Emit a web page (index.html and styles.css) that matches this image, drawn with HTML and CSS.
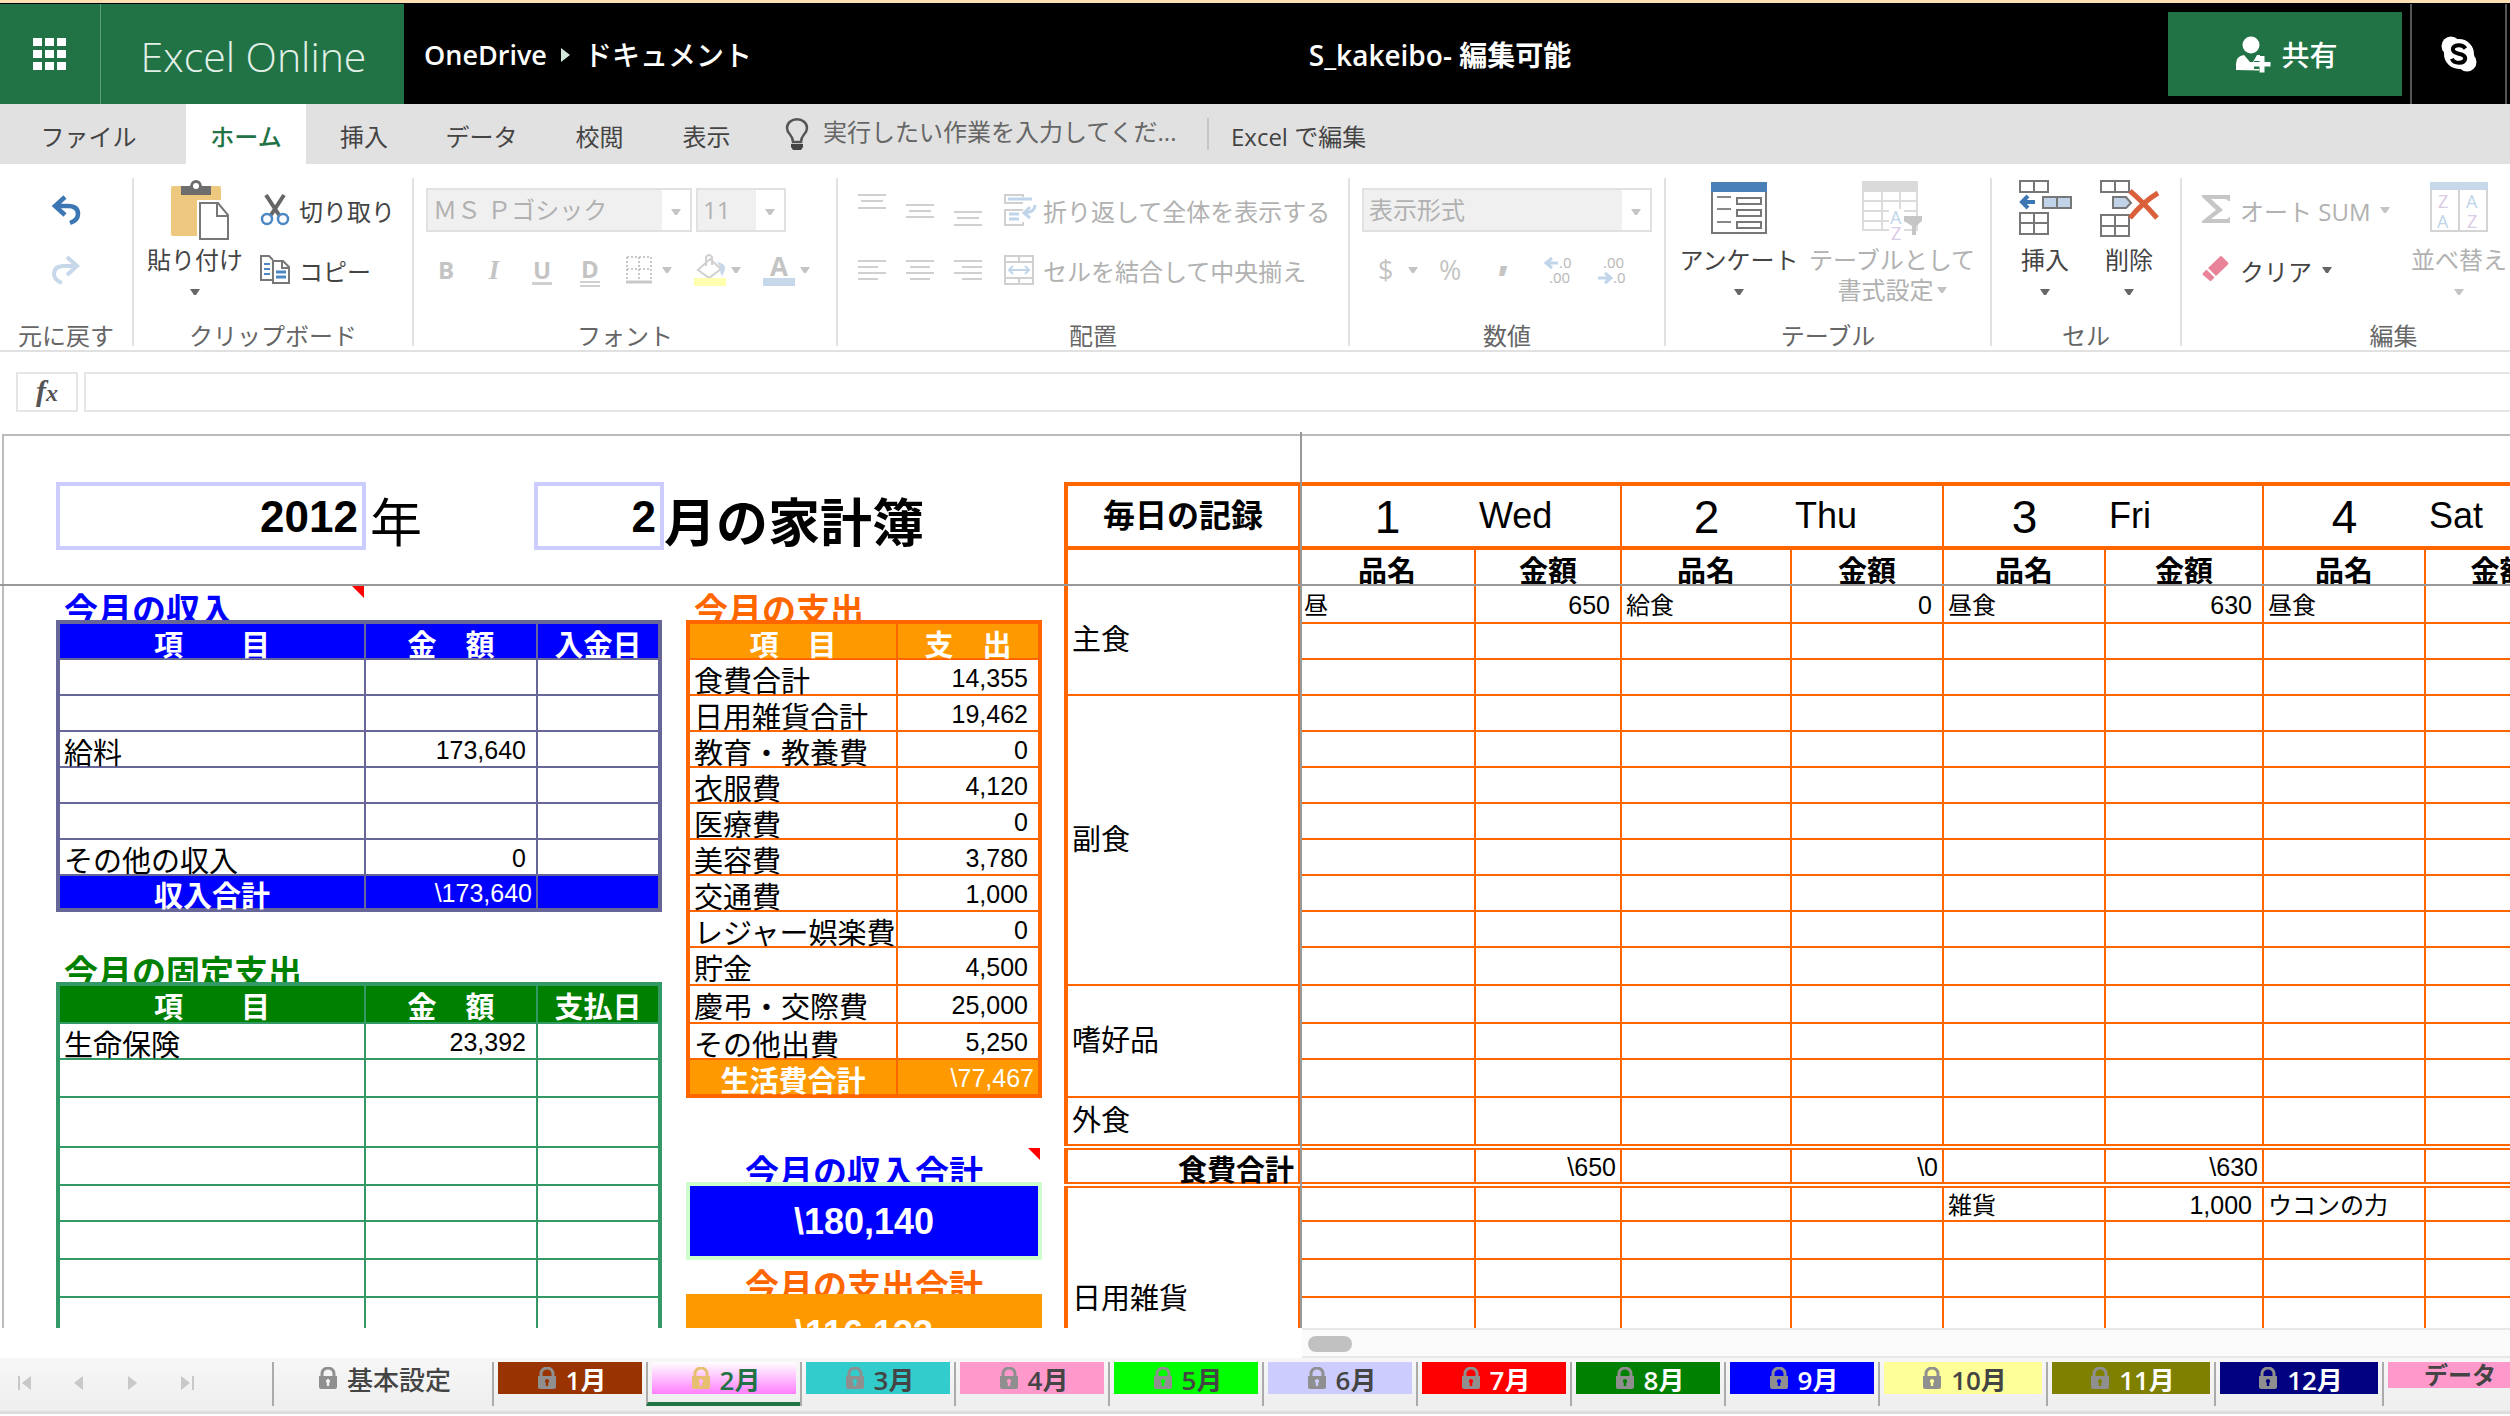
FILE: index.html
```html
<!DOCTYPE html>
<html lang="ja">
<head>
<meta charset="utf-8">
<title>S_kakeibo - Excel Online</title>
<link rel="stylesheet" href="styles.css">
</head>
<body>
<svg class="defs" width="0" height="0" aria-hidden="true">
  <symbol id="caret" viewBox="0 0 10 6"><path d="M0 0h10L6 6H4z" fill="currentColor"/></symbol>
  <symbol id="lock" viewBox="0 0 18 22"><path d="M3 11V6.500a6 5.500 0 0 1 12 0V11" fill="none" stroke="currentColor" stroke-width="3"/><path fill-rule="evenodd" d="M0 9h18v11q0 2-2 2H2q-2 0-2-2zM9 12a2.200 2.200 0 0 0-1.200 4V19h2.400v-3A2.200 2.200 0 0 0 9 12z" fill="currentColor"/></symbol>
</svg>

<header class="topbar">
  <button class="launcher" aria-label="アプリ起動ツール">
    <svg width="34" height="34" viewBox="0 0 34 34" fill="#fff"><path d="M0 1h9v8H0zM12 1h9v8h-9zM24 1h9v8h-9zM0 13h9v8H0zM12 13h9v8h-9zM24 13h9v8h-9zM0 25h9v8H0zM12 25h9v8h-9zM24 25h9v8h-9z"/></svg>
  </button>
  <a class="brand" href="#">Excel Online</a>
  <nav class="crumbs">
    <a href="#">OneDrive</a>
    <svg width="9" height="14" viewBox="0 0 9 14"><path d="M0 0l9 7-9 7z" fill="#d3e6da"/></svg>
    <a class="folder" href="#">ドキュメント</a>
  </nav>
  <div class="doc-name">S_kakeibo- 編集可能</div>
  <div class="top-actions">
    <button class="share">
      <svg width="36" height="36" viewBox="0 0 36 36" fill="#fff"><circle cx="15" cy="9" r="8.500"/><path d="M0 34v-6q0-8 8-9l6 7 3 0 4-7h3v6h-6v8h5v1.500z"/><path d="M23.500 20h5v6h6v4.500h-6v6h-5v-6h-6V26h6z"/></svg>
      <span>共有</span>
    </button>
    <button class="skype" aria-label="Skype">
      <svg width="36" height="36" viewBox="0 0 36 36"><circle cx="18" cy="18" r="15" fill="#fff"/><circle cx="10" cy="10" r="9.500" fill="#fff"/><circle cx="26" cy="26" r="9.500" fill="#fff"/><path d="M24.500 12.500Q22 9 17.500 9.200 12 9.600 11.800 13.300q0 3 6 4.400 6.600 1.300 6.400 4.800-.4 4.200-6.400 4.300-5.200 0-7-4" fill="none" stroke="#000" stroke-width="4"/></svg>
    </button>
  </div>
</header>

<nav class="tabs">
  <button class="tab file">ファイル</button>
  <button class="tab active">ホーム</button>
  <button class="tab insert">挿入</button>
  <button class="tab three">データ</button>
  <button class="tab review">校閲</button>
  <button class="tab">表示</button>
  <label class="tellme">
    <svg width="24" height="32" viewBox="0 0 24 32"><path d="M8 24q0-4-3-7.500Q2 13 2 10a10 8.800 0 0 1 20 0q0 3-3 6.500Q16 20 16 24z" fill="none" stroke="#555" stroke-width="2.500"/><path d="M6 26h12v3l-2 3H8l-2-3z" fill="#444"/></svg>
    <input type="text" placeholder="実行したい作業を入力してくだ..." aria-label="実行したい作業を入力してください">
  </label>
  <a class="open-excel" href="#">Excel で編集</a>
</nav>

<section class="ribbon">
  <div class="group g-undo">
    <div class="rows">
      <button class="row" aria-label="元に戻す"><svg width="30" height="28" viewBox="0 0 30 28"><path d="M14 1L4 10l10 9M4 10h13q10 0 10 8 0 6-8 9" fill="none" stroke="#3c77b4" stroke-width="4.500"/></svg></button>
      <button class="row" disabled aria-label="やり直し"><svg width="30" height="28" viewBox="0 0 30 28"><path d="M16 1l10 9-10 9M26 10H13Q3 10 3 18q0 6 8 9" fill="none" stroke="#c6d8ea" stroke-width="4"/></svg></button>
    </div>
    <h2>元に戻す</h2>
  </div>

  <div class="group g-clip">
    <div class="body">
      <button class="big">
        <svg width="58" height="60" viewBox="0 0 58 60"><path d="M2 6h46q2 0 2 2v48H2q-2 0-2-2V8q0-2 2-2z" fill="#edc87e"/><path d="M10 15V6h9q1-6 6-6t6 6h9v9z" fill="#6d6d6d"/><circle cx="25" cy="6" r="3" fill="#fff"/><path d="M26 20h24l10 12v30H26z" fill="#fff"/><path d="M29 23h18l10 12v24H29zM46 23v13h11" fill="#fff" stroke="#777" stroke-width="2"/></svg>
        <span>貼り付け</span>
        <svg class="caret"><use href="#caret"/></svg>
      </button>
      <div class="rows">
        <button class="row"><svg width="30" height="30" viewBox="0 0 30 30"><path d="M6 0l13 20M24 0L11 20" stroke="#666" stroke-width="4"/><ellipse cx="7" cy="24" rx="5" ry="5" fill="none" stroke="#4a87c4" stroke-width="2.500"/><ellipse cx="23" cy="24" rx="5" ry="5" fill="none" stroke="#4a87c4" stroke-width="2.500"/></svg><span>切り取り</span></button>
        <button class="row"><svg width="30" height="30" viewBox="0 0 30 30"><path d="M12 25H1V1h8l4 4" fill="none" stroke="#777" stroke-width="2"/><path d="M4 9h6M4 14h6M4 19h6" stroke="#4a87c4" stroke-width="2"/><path d="M13 6h10l6 6v16H13z" fill="#fff" stroke="#777" stroke-width="2"/><path d="M22 6v7h7" fill="none" stroke="#777" stroke-width="2"/><path d="M16 17h10M16 22h10" stroke="#4a87c4" stroke-width="3"/></svg><span>コピー</span></button>
      </div>
    </div>
    <h2>クリップボード</h2>
  </div>

  <div class="group g-font">
    <div class="rows">
      <div class="row combos">
        <div class="combo name"><select disabled aria-label="フォント"><option>ＭＳ Ｐゴシック</option></select><span class="drop"><svg class="caret"><use href="#caret"/></svg></span></div>
        <div class="combo size"><select disabled aria-label="フォント サイズ"><option>11</option></select><span class="drop"><svg class="caret"><use href="#caret"/></svg></span></div>
      </div>
      <div class="row styles">
        <button class="glyph" disabled><b>B</b></button>
        <button class="glyph italic" disabled><i>I</i></button>
        <button class="glyph under" disabled><span>U</span></button>
        <button class="glyph dunder" disabled><span>D</span></button>
        <button class="pick borders" disabled aria-label="罫線"><svg width="26" height="28" viewBox="0 0 26 28"><path d="M1 1h24M1 13h24M1 1v22M13 1v22M25 1v22" stroke="#c8c8c8" stroke-width="2" stroke-dasharray="2 2"/><path d="M0 26h26" stroke="#c8c8c8" stroke-width="3"/></svg><svg class="caret"><use href="#caret"/></svg></button>
        <button class="pick" disabled aria-label="塗りつぶしの色"><svg width="32" height="32" viewBox="0 0 32 32"><path d="M16 5l11 10-12 9L4 16zM12 12V3q3-4 6 0v8" fill="none" stroke="#cfcfcf" stroke-width="2"/><path d="M23 8q9 1 8 8l-3 6q-3-4-1-8z" fill="#c6d8ea"/><path d="M0 24h32v8H0z" fill="#ffffb0"/></svg><svg class="caret"><use href="#caret"/></svg></button>
        <button class="pick" disabled aria-label="フォントの色"><span class="font-color">A</span><svg class="caret"><use href="#caret"/></svg></button>
      </div>
    </div>
    <h2>フォント</h2>
  </div>

  <div class="group g-align">
    <div class="rows">
      <div class="row">
        <button class="ico" disabled aria-label="上揃え"><svg width="28" height="32" viewBox="0 0 28 32" stroke="#d0d0d0" stroke-width="2"><path d="M0 1h28M3 7h22M0 14h28"/></svg></button>
        <button class="ico" disabled aria-label="上下中央揃え"><svg width="28" height="32" viewBox="0 0 28 32" stroke="#d0d0d0" stroke-width="2"><path d="M0 11h28M3 17h22M0 23h28"/></svg></button>
        <button class="ico" disabled aria-label="下揃え"><svg width="28" height="32" viewBox="0 0 28 32" stroke="#d0d0d0" stroke-width="2"><path d="M0 18h28M3 24h22M0 31h28"/></svg></button>
        <button class="cmd" disabled><svg width="32" height="32" viewBox="0 0 32 32" fill="none" stroke-width="2"><path d="M19 9H1V1h18v2M19 16H1v15h18v-3" stroke="#d0d0d0"/><path d="M4 5h24M5 20h10M5 25h10M31 11q0 7-10 8M26 13l-6 6 6 5" stroke="#c1d5ea" stroke-width="3"/></svg><span>折り返して全体を表示する</span></button>
      </div>
      <div class="row">
        <button class="ico" disabled aria-label="左揃え"><svg width="28" height="24" viewBox="0 0 28 24" stroke="#d0d0d0" stroke-width="2"><path d="M0 3h28M0 9h20M0 15h28M0 21h20"/></svg></button>
        <button class="ico" disabled aria-label="中央揃え"><svg width="28" height="24" viewBox="0 0 28 24" stroke="#d0d0d0" stroke-width="2"><path d="M0 3h28M4 9h20M0 15h28M4 21h20"/></svg></button>
        <button class="ico" disabled aria-label="右揃え"><svg width="28" height="24" viewBox="0 0 28 24" stroke="#d0d0d0" stroke-width="2"><path d="M0 3h28M8 9h20M0 15h28M8 21h20"/></svg></button>
        <button class="cmd" disabled><svg width="32" height="32" viewBox="0 0 32 32" fill="none" stroke-width="2"><path d="M1 2h28v28H1zM1 8h28M1 24h28M15 2v6M15 24v6" stroke="#d0d0d0"/><path d="M5 16h20M9 12l-4 4 4 4M21 12l4 4-4 4" stroke="#c1d5ea"/></svg><span>セルを結合して中央揃え</span></button>
      </div>
    </div>
    <h2>配置</h2>
  </div>

  <div class="group g-num">
    <div class="rows">
      <div class="row">
        <div class="combo format"><select disabled aria-label="表示形式"><option>表示形式</option></select><span class="drop"><svg class="caret"><use href="#caret"/></svg></span></div>
      </div>
      <div class="row numbers">
        <button disabled>$</button>
        <button disabled aria-label="通貨の種類"><svg class="caret"><use href="#caret"/></svg></button>
        <button disabled>%</button>
        <button class="comma" disabled>,</button>
        <button disabled aria-label="小数点以下の桁数を増やす"><svg width="32" height="30" viewBox="0 0 32 30"><path d="M14 8H3M8 3L2 8l6 5" fill="none" stroke="#c1d5ea" stroke-width="3"/><text x="15" y="13">.0</text><text x="5" y="28">.00</text></svg></button>
        <button disabled aria-label="小数点以下の桁数を減らす"><svg width="32" height="30" viewBox="0 0 32 30"><path d="M0 23h12M7 18l6 5-6 5" fill="none" stroke="#c1d5ea" stroke-width="3"/><text x="5" y="13">.00</text><text x="15" y="28">.0</text></svg></button>
      </div>
    </div>
    <h2>数値</h2>
  </div>

  <div class="group g-table">
    <div class="body">
      <button class="big">
        <svg width="56" height="60" viewBox="0 0 56 60"><path d="M1 3h54v50H1z" fill="#fff" stroke="#777" stroke-width="2"/><path d="M0 2h56v10H0z" fill="#4a80b8"/><path d="M6 17h14M6 29h14M6 42h14" stroke="#888" stroke-width="2"/><path d="M26 18h24v6H26zM26 30h24v6H26zM26 42h24v6H26z" fill="none" stroke="#777" stroke-width="2"/></svg>
        <span>アンケート</span>
        <svg class="caret"><use href="#caret"/></svg>
      </button>
      <button class="big wide" disabled>
        <svg width="60" height="60" viewBox="0 0 60 60"><path d="M1 2h54v48H1zM1 21h54M1 31h54M1 41h54M20 12v38M38 12v38" fill="#fff" stroke="#dcdcdc" stroke-width="2"/><path d="M0 1h56v11H0z" fill="#dadada"/><path d="M27 29h15v31H27z" fill="#fff"/><path d="M42 36h18v5l-6 5v9h-4v-9l-8-5z" fill="#c6c6c6"/><text x="28" y="44" fill="#c1d5ea">A</text><text x="29" y="60" fill="#dccbe6">Z</text></svg>
        <span>テーブルとして</span>
        <span class="second">書式設定<svg class="caret"><use href="#caret"/></svg></span>
      </button>
    </div>
    <h2>テーブル</h2>
  </div>

  <div class="group g-cells">
    <div class="body">
      <button class="big">
        <svg width="54" height="60" viewBox="0 0 54 60" stroke="#777" stroke-width="2" fill="#fff"><path d="M2 1h28v11H2zM16 1v11M2 33h28v21H2zM16 33v21M2 43h28"/><path d="M25 17h28v11H25zM39 17v11" fill="#c0d3e8"/><path d="M17 22H5M10 16l-6 6 6 6" fill="none" stroke="#3c77b4" stroke-width="4"/></svg>
        <span>挿入</span>
        <svg class="caret"><use href="#caret"/></svg>
      </button>
      <button class="big">
        <svg width="60" height="60" viewBox="0 0 60 60" stroke="#777" stroke-width="2" fill="#fff"><path d="M2 1h28v11H2zM16 1v11M2 35h28v21H2zM16 35v21M2 46h28"/><path d="M14 17h13l5 6-5 5H14z" fill="#c0d3e8"/><path d="M31 11q12 10 27 27M59 13Q44 22 31 38" fill="none" stroke="#d9603b" stroke-width="5"/></svg>
        <span>削除</span>
        <svg class="caret"><use href="#caret"/></svg>
      </button>
    </div>
    <h2>セル</h2>
  </div>

  <div class="group g-edit">
    <div class="body">
      <div class="rows">
        <button class="row" disabled><svg width="28" height="30" viewBox="0 0 28 30"><path d="M0 0h28v6h-2q0-2-4-2H9l12 11L9 24h14q4 0 4-2h1v6H0v-2l14-11L0 2z" fill="#c6c6c6"/></svg><span>オート SUM</span><svg class="caret"><use href="#caret"/></svg></button>
        <button class="row"><svg width="28" height="30" viewBox="0 0 28 30"><path d="M18 1.500q1-1 2 0l6 6q1 1 0 2L14 21l-8-8z" fill="#e8839a"/><path d="M4.500 14.500l8 8-3 3q-1 1-2 0L1 20q-1-1 0-2z" fill="#e8839a"/></svg><span>クリア</span><svg class="caret"><use href="#caret"/></svg></button>
      </div>
      <button class="big" disabled>
        <svg width="58" height="60" viewBox="0 0 58 60"><path d="M1 3h56v48H1zM29 8v43" fill="#fff" stroke="#d4d4d4" stroke-width="2"/><path d="M0 2h58v8H0z" fill="#c6d8ea"/><text x="8" y="28" fill="#dccbe6">Z</text><text x="7" y="48" fill="#c1d5ea">A</text><text x="36" y="28" fill="#c1d5ea">A</text><text x="37" y="48" fill="#dccbe6">Z</text></svg>
        <span>並べ替え</span>
        <svg class="caret"><use href="#caret"/></svg>
      </button>
    </div>
    <h2>編集</h2>
  </div>
</section>

<div class="formula">
  <button class="fx" aria-label="関数の挿入"><i>f</i><i class="x">x</i></button>
  <input type="text" aria-label="数式バー">
</div>

<main class="sheet-area">
  <div class="sheet">
    <div class="left">
      <div class="title-row">
        <div class="boxed">2012</div><div class="unit">年</div>
        <div class="boxed">2</div><div class="unit strong">月の家計簿</div>
      </div>
      <div class="columns">
        <div class="col-income">
          <h2 class="sec blue noted">今月の収入</h2>
          <table class="tbl income">
            <colgroup><col class="c1"><col class="c2"><col></colgroup>
            <thead><tr class="r37"><th>項　　目</th><th>金　額</th><th>入金日</th></tr></thead>
            <tbody>
              <tr class="r36"><td></td><td></td><td></td></tr>
              <tr class="r36"><td></td><td></td><td></td></tr>
              <tr class="r36"><td>給料</td><td class="n">173,640</td><td></td></tr>
              <tr class="r36"><td></td><td></td><td></td></tr>
              <tr class="r36"><td></td><td></td><td></td></tr>
              <tr class="r36"><td>その他の収入</td><td class="n">0</td><td></td></tr>
            </tbody>
            <tfoot><tr class="r35"><th>収入合計</th><td class="n yen">\173,640</td><td></td></tr></tfoot>
          </table>
          <h2 class="sec green">今月の固定支出</h2>
          <table class="tbl fixed">
            <colgroup><col class="c1"><col class="c2"><col></colgroup>
            <thead><tr class="r39"><th>項　　目</th><th>金　額</th><th>支払日</th></tr></thead>
            <tbody>
              <tr class="r36"><td>生命保険</td><td class="n">23,392</td><td></td></tr>
              <tr class="r38"><td></td><td></td><td></td></tr>
              <tr class="r50"><td></td><td></td><td></td></tr>
              <tr class="r38"><td></td><td></td><td></td></tr>
              <tr class="r36"><td></td><td></td><td></td></tr>
              <tr class="r38"><td></td><td></td><td></td></tr>
              <tr class="r38"><td></td><td></td><td></td></tr>
              <tr class="r38"><td></td><td></td><td></td></tr>
            </tbody>
          </table>
        </div>
        <div class="col-spend">
          <h2 class="sec orange">今月の支出</h2>
          <table class="tbl spend">
            <colgroup><col class="c1"><col></colgroup>
            <thead><tr class="r37"><th>項　目</th><th>支　出</th></tr></thead>
            <tbody>
              <tr class="r36"><td>食費合計</td><td class="n">14,355</td></tr>
              <tr class="r36"><td>日用雑貨合計</td><td class="n">19,462</td></tr>
              <tr class="r36"><td>教育・教養費</td><td class="n">0</td></tr>
              <tr class="r36"><td>衣服費</td><td class="n">4,120</td></tr>
              <tr class="r36"><td>医療費</td><td class="n">0</td></tr>
              <tr class="r36"><td>美容費</td><td class="n">3,780</td></tr>
              <tr class="r36"><td>交通費</td><td class="n">1,000</td></tr>
              <tr class="r36"><td>レジャー娯楽費</td><td class="n">0</td></tr>
              <tr class="r38"><td>貯金</td><td class="n">4,500</td></tr>
              <tr class="r38"><td>慶弔・交際費</td><td class="n">25,000</td></tr>
              <tr class="r36"><td>その他出費</td><td class="n">5,250</td></tr>
            </tbody>
            <tfoot><tr class="r37"><th>生活費合計</th><td class="n yen">\77,467</td></tr></tfoot>
          </table>
          <h2 class="sec blue center noted first">今月の収入合計</h2>
          <div class="total in">\180,140</div>
          <h2 class="sec orange center next">今月の支出合計</h2>
          <div class="total out">\116,133</div>
        </div>
      </div>
    </div>
    <div class="right">
      <table class="daily">
        <colgroup><col class="d0"><col class="d1"><col class="d2"><col class="d3"><col class="d4"><col class="d5"><col class="d6"><col class="d5"><col></colgroup>
        <thead>
          <tr class="days"><th>毎日の記録</th><td class="day">1</td><td class="dow">Wed</td><td class="day">2</td><td class="dow">Thu</td><td class="day">3</td><td class="dow">Fri</td><td class="day">4</td><td class="dow">Sat</td></tr>
          <tr class="heads"><th></th><th>品名</th><th>金額</th><th>品名</th><th>金額</th><th>品名</th><th>金額</th><th>品名</th><th>金額</th></tr>
        </thead>
        <tbody>
          <tr class="r38"><td class="cat" rowspan="3">主食</td><td>昼</td><td class="n">650</td><td>給食</td><td class="n">0</td><td>昼食</td><td class="n">630</td><td>昼食</td><td></td></tr>
          <tr class="r36"><td></td><td></td><td></td><td></td><td></td><td></td><td></td><td></td></tr>
          <tr class="r36"><td></td><td></td><td></td><td></td><td></td><td></td><td></td><td></td></tr>
          <tr class="r36"><td class="cat" rowspan="8">副食</td><td></td><td></td><td></td><td></td><td></td><td></td><td></td><td></td></tr>
          <tr class="r36"><td></td><td></td><td></td><td></td><td></td><td></td><td></td><td></td></tr>
          <tr class="r36"><td></td><td></td><td></td><td></td><td></td><td></td><td></td><td></td></tr>
          <tr class="r36"><td></td><td></td><td></td><td></td><td></td><td></td><td></td><td></td></tr>
          <tr class="r36"><td></td><td></td><td></td><td></td><td></td><td></td><td></td><td></td></tr>
          <tr class="r36"><td></td><td></td><td></td><td></td><td></td><td></td><td></td><td></td></tr>
          <tr class="r36"><td></td><td></td><td></td><td></td><td></td><td></td><td></td><td></td></tr>
          <tr class="r38"><td></td><td></td><td></td><td></td><td></td><td></td><td></td><td></td></tr>
          <tr class="r38"><td class="cat" rowspan="3">嗜好品</td><td></td><td></td><td></td><td></td><td></td><td></td><td></td><td></td></tr>
          <tr class="r36"><td></td><td></td><td></td><td></td><td></td><td></td><td></td><td></td></tr>
          <tr class="r38"><td></td><td></td><td></td><td></td><td></td><td></td><td></td><td></td></tr>
          <tr class="r50"><td class="cat">外食</td><td></td><td></td><td></td><td></td><td></td><td></td><td></td><td></td></tr>
          <tr class="r38 sum"><th>食費合計</th><td></td><td class="n yen">\650</td><td></td><td class="n yen">\0</td><td></td><td class="n yen">\630</td><td></td><td></td></tr>
          <tr class="r36"><td class="cat" rowspan="6">日用雑貨</td><td></td><td></td><td></td><td></td><td>雑貨</td><td class="n">1,000</td><td>ウコンの力</td><td></td></tr>
          <tr class="r38"><td></td><td></td><td></td><td></td><td></td><td></td><td></td><td></td></tr>
          <tr class="r38"><td></td><td></td><td></td><td></td><td></td><td></td><td></td><td></td></tr>
          <tr class="r38"><td></td><td></td><td></td><td></td><td></td><td></td><td></td><td></td></tr>
          <tr class="r38"><td></td><td></td><td></td><td></td><td></td><td></td><td></td><td></td></tr>
          <tr class="r38"><td></td><td></td><td></td><td></td><td></td><td></td><td></td><td></td></tr>
        </tbody>
      </table>
    </div>
  </div>
</main>

<div class="hscroll"><div class="track"><div class="thumb"></div></div></div>

<footer class="sheets">
  <div class="nav">
    <button disabled aria-label="最初のシート"><svg width="14" height="14" viewBox="0 0 14 14"><path d="M0 0h2v14H0zM13 0v14L4 7z" fill="#c8c8c8"/></svg></button>
    <button disabled aria-label="前のシート"><svg width="14" height="14" viewBox="0 0 14 14"><path d="M11 0v14L2 7z" fill="#c8c8c8"/></svg></button>
    <button disabled aria-label="次のシート"><svg width="14" height="14" viewBox="0 0 14 14"><path d="M2 0v14l9-7z" fill="#c8c8c8"/></svg></button>
    <button disabled aria-label="最後のシート"><svg width="14" height="14" viewBox="0 0 14 14"><path d="M12 0h2v14h-2zM1 0v14l9-7z" fill="#c8c8c8"/></svg></button>
  </div>
  <button class="st base"><span><svg class="lock"><use href="#lock"/></svg>基本設定</span></button>
  <button class="st m1 light"><span><svg class="lock"><use href="#lock"/></svg>1月</span></button>
  <button class="st m2 current"><span><svg class="lock"><use href="#lock"/></svg>2月</span></button>
  <button class="st m3"><span><svg class="lock"><use href="#lock"/></svg>3月</span></button>
  <button class="st m4"><span><svg class="lock"><use href="#lock"/></svg>4月</span></button>
  <button class="st m5"><span><svg class="lock"><use href="#lock"/></svg>5月</span></button>
  <button class="st m6"><span><svg class="lock"><use href="#lock"/></svg>6月</span></button>
  <button class="st m7 light"><span><svg class="lock"><use href="#lock"/></svg>7月</span></button>
  <button class="st m8 light"><span><svg class="lock"><use href="#lock"/></svg>8月</span></button>
  <button class="st m9 light"><span><svg class="lock"><use href="#lock"/></svg>9月</span></button>
  <button class="st m10 w2"><span><svg class="lock"><use href="#lock"/></svg>10月</span></button>
  <button class="st m11 w2 light"><span><svg class="lock"><use href="#lock"/></svg>11月</span></button>
  <button class="st m12 w2 light"><span><svg class="lock"><use href="#lock"/></svg>12月</span></button>
  <button class="st data"><span>データ</span></button>
</footer>
</body>
</html>
```

FILE: styles.css
```css
* { box-sizing: border-box; }

body {
  margin: 0;
  height: 100vh;
  display: flex;
  flex-direction: column;
  overflow: hidden;
  background: #fff;
  color: #444;
  font: 24px/30px "Open Sans", "Noto Sans CJK JP", sans-serif;
}

button, input, select { font: inherit; color: inherit; }
button { border: 0; padding: 0; background: none; white-space: nowrap; }
button:disabled { color: #b1b1b1; }
a { color: inherit; text-decoration: none; }
h2 { margin: 0; font-size: 24px; font-weight: 400; }
svg { display: block; flex: none; overflow: visible; }
.defs { position: absolute; }
.caret { width: 10px; height: 6px; color: #666; }
:disabled .caret, .drop .caret { color: #c4c4c4; }

/* Top bar */
.topbar {
  flex: none;
  display: flex;
  align-items: stretch;
  height: 104px;
  border-top: 3px solid #fde0b2;
  padding-top: 1px;
  background: #000;
  color: #fff;
  position: relative;
}
.launcher { width: 101px; display: grid; place-items: center; background: #217346; border-right: 1px solid #5f9d79; }
.brand {
  width: 303px;
  display: flex;
  align-items: center;
  justify-content: center;
  padding: 4px 0 0 2px;
  background: #217346;
  color: #e3f0e8;
  font-size: 41px;
  font-weight: 300;
}
.crumbs { display: flex; align-items: center; gap: 14px; padding: 2px 0 0 20px; font-size: 27px; font-weight: 600; }
.crumbs .folder { font-size: 28px; font-weight: 500; }
.doc-name { position: absolute; inset: 3px 0 0; margin: auto; width: max-content; height: 40px; padding-left: 370px; font-size: 28px; line-height: 40px; font-weight: 600; }
.top-actions { display: flex; margin-left: auto; }
.share { display: flex; align-items: center; justify-content: center; gap: 9px; width: 234px; margin: 8px 8px 8px 0; padding-left: 4px; background: #217346; font-size: 28px; font-weight: 500; }
.share span { padding-top: 2px; }
.skype { width: 97px; display: grid; place-items: center; border: solid #555; border-width: 0 2px; margin-right: 3px; }

/* Ribbon tabs */
.tabs { flex: none; display: flex; height: 60px; background: #e1e1e1; line-height: 66px; }
.tab { width: 97px; line-height: inherit; }
.tab.file { width: 186px; padding-right: 9px; }
.tab.active { width: 120px; background: #fff; color: #217346; font-weight: 500; }
.tab.insert { width: 116px; }
.tab.three { width: 119px; }
.tab.review { width: 117px; }
.tellme { display: flex; align-items: center; gap: 14px; margin-left: 30px; width: 422px; }
.tellme input { flex: 1; min-width: 0; border: 0; padding: 0 0 4px; background: none; outline: 0; line-height: 30px; }
.tellme input::placeholder { color: #666; opacity: 1; }
.open-excel { margin: 14px 0; padding-left: 22px; border-left: 2px solid #c6c6c6; line-height: 38px; }

/* Ribbon */
.ribbon { flex: none; display: flex; height: 188px; padding: 14px 0 4px; border-bottom: 2px solid #e1e1e1; overflow: hidden; }
.group { flex: none; display: flex; flex-direction: column; justify-content: space-between; height: 168px; border-right: 2px solid #e1e1e1; }
.group h2 { line-height: 20px; color: #666; text-align: center; }
.g-undo { width: 134px; }
.g-clip { width: 280px; }
.g-font { width: 424px; }
.g-align { width: 512px; }
.g-num { width: 316px; }
.g-table { width: 326px; }
.g-cells { width: 190px; }
.g-edit { width: 425px; }
.body { display: flex; }
.rows { display: flex; flex-direction: column; padding-top: 2px; }
.row { display: flex; align-items: center; gap: 9px; height: 60px; }
.row > span, .cmd > span { padding-top: 3px; }
.g-undo .row { justify-content: center; }
.big { display: flex; flex-direction: column; align-items: center; width: 94px; padding-top: 2px; }
.big > svg:first-child { margin-bottom: 5px; font: 18px "Open Sans", sans-serif; }
.big > .caret { margin-top: 14px; }
.big .second { display: flex; align-items: center; gap: 3px; }
.g-clip .body { padding-left: 14px; gap: 18px; }
.g-clip .big > svg:first-child { margin-left: 10px; }

.combo { display: flex; height: 44px; border: 2px solid #e1e1e1; }
.combo select { flex: 1; min-width: 0; appearance: none; border: 0; border-radius: 0; padding: 0 5px; background: #f0f0f0; color: #b1b1b1; opacity: 1; }
.combo .drop { width: 28px; display: grid; place-items: center; padding-top: 4px; }
.combo.name { width: 266px; }
.combo.size { width: 90px; }
.combo.format { width: 290px; }
.g-font .rows { padding-left: 12px; }
.combos { gap: 4px; }
.styles { gap: 0; margin-left: -4px; color: #c4c4c4; }
.styles button { color: inherit; }
.glyph { width: 48px; }
.glyph.italic { font-family: "Liberation Serif", serif; font-size: 27px; font-weight: 700; }
.glyph span { display: inline-block; padding: 0 1px; line-height: 24px; font-weight: 700; }
.glyph.under span { border-bottom: 3px solid #d0d0d0; }
.glyph.dunder span { border-bottom: 6px double #d0d0d0; }
.pick { display: flex; align-items: center; gap: 5px; margin-right: 22px; }
.pick.borders { gap: 10px; margin-left: 12px; }
.font-color { width: 32px; border-bottom: 8px solid #c6d8ea; line-height: 24px; font-size: 26px; font-weight: 700; }
.g-align .rows { padding-left: 20px; }
.g-align .row { gap: 20px; }
.cmd { display: flex; align-items: center; gap: 7px; margin-left: 2px; }
.g-num .rows { padding-left: 12px; }
.numbers { display: grid; grid-template-columns: 30px 31px 59px 46px 54px 30px; gap: 0; padding-left: 16px; justify-items: start; font-size: 27px; color: #c4c4c4; }
.numbers button { color: inherit; }
.numbers text { font: 15px "Open Sans", sans-serif; fill: #b8b8b8; }
.numbers .comma { font-size: 36px; font-weight: 800; line-height: 20px; padding-bottom: 24px; }
.g-table .body { padding-left: 13px; gap: 9px; }
.g-table .big { width: 120px; }
.g-table .wide { width: 168px; }
.g-cells .body { padding-left: 11px; }
.g-cells .big { width: 84px; }
.g-edit .rows { width: 207px; }
.g-edit .body { padding-left: 20px; }
.g-edit .row { gap: 10px; }
.g-edit .big { width: 100px; }

/* Formula bar */
.formula { flex: none; display: flex; gap: 6px; height: 82px; padding: 20px 0 22px 16px; }
.formula button, .formula input { border: 2px solid #e6e6e6; }
.fx { width: 62px; font: 700 30px/30px "Liberation Serif", serif; color: #555; }
.fx .x { font-size: 24px; }
.formula input { flex: 1; border-right: 0; padding: 0 8px; outline: 0; }

/* Worksheet */
.sheet-area { flex: 1; min-height: 0; display: flex; position: relative; padding-left: 2px; }
.sheet-area::before, .sheet-area::after { content: ""; position: absolute; background: #999; }
.sheet-area::before { left: 0; right: 0; top: 150px; height: 2px; }
.sheet-area::after { left: 1300px; top: -2px; bottom: 0; width: 2px; }
.sheet { flex: 1; min-width: 0; display: flex; overflow: hidden; border: solid #bbb; border-width: 2px 0 0 2px; padding-top: 46px; color: #000; font-family: "Noto Sans CJK JP", sans-serif; }
.left { flex: none; width: 1060px; padding-left: 52px; }
.title-row { display: grid; grid-template-columns: 310px 168px 130px 1fr; height: 68px; font-size: 52px; line-height: 60px; }
.boxed { height: 68px; border: 4px solid #ccf; padding-right: 4px; text-align: right; font: 700 44px/62px "Liberation Sans", sans-serif; }
.unit { padding: 8px 0 0 4px; }
.unit.strong { padding-left: 0; font-weight: 700; }
.columns { display: flex; gap: 24px; }
.col-income { width: 606px; }
.col-spend { width: 356px; }
.sec { height: 36px; margin-top: 34px; padding-left: 8px; overflow: hidden; position: relative; font-size: 34px; line-height: 50px; font-weight: 700; }
.sec.blue { color: #00f; }
.sec.green { color: #008000; }
.sec.orange { color: #f60; }
.sec.center { padding: 0; text-align: center; }
.sec.first { margin-top: 48px; }
.sec.next { height: 34px; margin-top: 0; }
.noted::after { content: ""; position: absolute; right: 2px; top: 2px; border: 6px solid; border-color: #f00 #f00 transparent transparent; }
.col-income .noted::after { right: 298px; }

.tbl, .daily { border-collapse: collapse; table-layout: fixed; }
.tbl { width: 100%; border: 4px solid var(--line); }
.tbl th, .tbl td { border: 2px solid var(--line); padding: 5px 0 0 4px; vertical-align: top; font-size: 29px; line-height: 28px; white-space: nowrap; text-align: left; }
.tbl thead th, .tbl tfoot th { text-align: center; font-weight: 700; padding-left: 0; color: #fff; }
.tbl tbody .n, .tbl tfoot .n, .daily .n { padding: 2px 10px 0 0; vertical-align: middle; text-align: right; font: 25px/28px "Liberation Sans", sans-serif; }
.tbl tfoot .yen, .daily .yen { padding-right: 4px; }
.tbl thead tr, .tbl tfoot tr { background: var(--fill); color: #fff; }
.income, .fixed { --line: #669; }
.tbl .c1 { width: 307px; }
.tbl .c2 { width: 172px; }
.income { --fill: #00f; }
.fixed { --line: #396; --fill: #008000; }
.spend { --line: #f60; --fill: #f90; }
.spend .c1 { width: 209px; }
.r35 { height: 35px; }
.r36 { height: 36px; }
.r37 { height: 37px; }
.r38 { height: 38px; }
.r39 { height: 39px; }
.r50 { height: 50px; }
.r35 th { padding-top: 4px; }

.total { height: 78px; color: #fff; text-align: center; font: 700 36px/72px "Liberation Sans", sans-serif; }
.total.in { background: #00f; border: 4px solid #cfc; }
.total.out { background: #f90; border: 4px solid #f90; }

.right { flex: 1; min-width: 0; overflow: hidden; }
.daily { width: 1511px; border-left: 4px solid #f60; }
.d0 { width: 233px; }
.d1 { width: 176px; }
.d2 { width: 146px; }
.d3 { width: 170px; }
.d4 { width: 152px; }
.d5 { width: 162px; }
.d6 { width: 158px; }
.daily th, .daily td { border: 2px solid #f60; padding: 0 0 0 4px; line-height: 28px; white-space: nowrap; text-align: left; }
.daily .cat { padding-bottom: 6px; font-size: 29px; }
.daily .days { height: 64px; }
.daily .days > * { border-top-width: 4px; border-bottom-width: 4px; }
.daily .days th { padding: 0 0 6px; text-align: center; font-size: 32px; font-weight: 700; }
.daily .day { padding: 2px 0 0; border-right: 0; text-align: center; font: 46px/50px "Liberation Sans", sans-serif; }
.daily .dow { border-left: 0; font: 36px/50px "Liberation Sans", sans-serif; }
.daily .heads { height: 37px; }
.daily .heads th { border-bottom: 0; padding: 5px 0 0; vertical-align: top; text-align: center; font-size: 29px; }
.daily tbody tr:first-child td { border-top: 0; }
.daily .sum > * { border-top: 6px double #f60; border-bottom: 6px double #f60; }
.daily .sum th { padding: 4px 4px 0 0; text-align: right; vertical-align: top; font-size: 29px; }

/* Horizontal scroll bar */
.hscroll { flex: none; height: 30px; padding-left: 1302px; }
.track { height: 30px; padding: 6px; background: #fbfbfb; border: solid #e8e8e8; border-width: 2px 0; }
.thumb { width: 44px; height: 16px; border-radius: 8px; background: #c1c1c1; }

/* Sheet tabs */
.sheets { flex: none; display: flex; align-items: flex-start; height: 58px; padding-top: 4px; overflow: hidden; background: linear-gradient(#f7f7f7, #eee 52px, #dcdcdc 54px, #dcdcdc 56px, #fff 56px); }
.nav { flex: none; width: 272px; display: flex; gap: 40px; padding: 14px 0 0 18px; }
.st { flex: none; display: flex; align-items: flex-start; width: 154px; height: 44px; padding: 0 4px; border-left: 2px solid #ababab; }
.st > span { flex: 1; display: flex; align-items: center; justify-content: center; gap: 10px; height: 32px; padding: 4px 0 0 4px; font-size: 26px; font-weight: 600; }
.lock { width: 18px; height: 22px; margin-top: -4px; color: #8f8f8f; }
.st.base { width: 220px; }
.st.base > span { font-weight: 500; }
.st.w2 { width: 168px; }
.st.light { color: #fff; }
.m1 > span { background: #930; }
.m2 > span { background: linear-gradient(#fff, #ff80ff); }
.m3 > span { background: #3cc; }
.m4 > span { background: #f9c; }
.m5 > span { background: #0f0; }
.m6 > span { background: #ccf; }
.m7 > span { background: #f00; }
.m8 > span { background: #008000; }
.m9 > span { background: #00f; }
.m10 > span { background: #ff9; }
.m11 > span { background: #808000; }
.m12 > span { background: #000080; }
.st.current { color: #217346; border-bottom: 4px solid #217346; }
.current .lock { color: #e6c070; }
.st.data > span { height: 26px; padding: 0; background: #f9c; font-size: 24px; }
```
